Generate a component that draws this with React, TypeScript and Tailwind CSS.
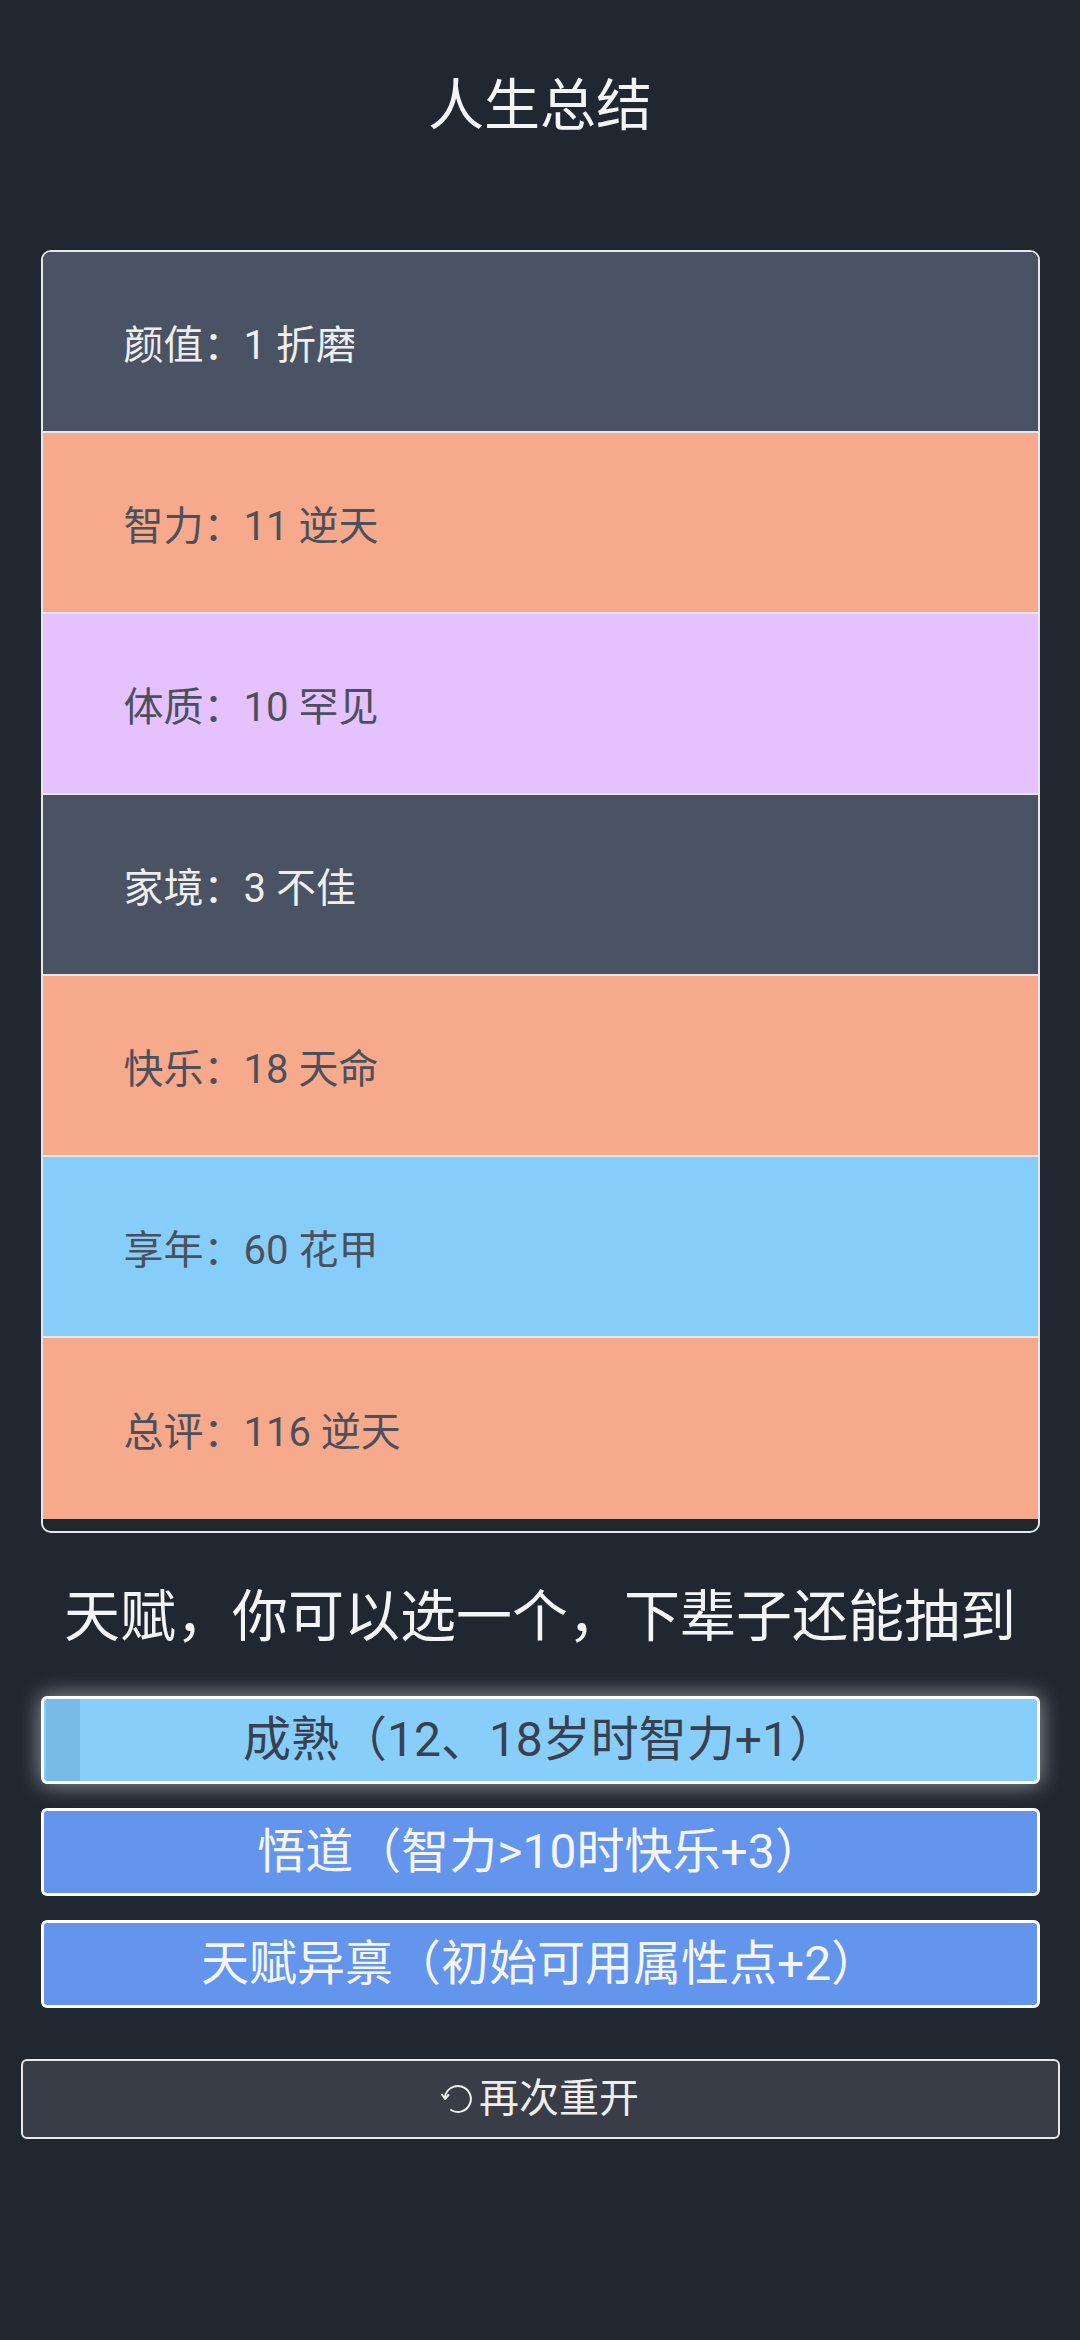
import React from "react";

const rows: { label: string; bg: string; text: string }[] = [
  { label: "颜值：1 折磨", bg: "bg-[#4a5363]", text: "text-[#eeeeee]" },
  { label: "智力：11 逆天", bg: "bg-[#f7a98b]", text: "text-[#4b505c]" },
  { label: "体质：10 罕见", bg: "bg-[#e5c1fe]", text: "text-[#4b505c]" },
  { label: "家境：3 不佳", bg: "bg-[#4a5363]", text: "text-[#eeeeee]" },
  { label: "快乐：18 天命", bg: "bg-[#f7a98b]", text: "text-[#4b505c]" },
  { label: "享年：60 花甲", bg: "bg-[#87cdf9]", text: "text-[#4b505c]" },
  { label: "总评：116 逆天", bg: "bg-[#f7a98b]", text: "text-[#4b505c]" },
];

function RestartIcon() {
  return (
    <svg width="34" height="34" viewBox="0 0 34 34" fill="none" className="shrink-0">
      <path
        d="M4 15 A13 13 0 1 1 10 28"
        stroke="#eeeeee"
        strokeWidth="2"
        strokeLinecap="round"
        fill="none"
      />
      <path
        d="M1 12.5 L4 17 L7.5 13"
        stroke="#eeeeee"
        strokeWidth="2"
        strokeLinecap="round"
        strokeLinejoin="round"
        fill="none"
      />
    </svg>
  );
}

export default function App() {
  return (
    <div
      className="w-full min-h-[2340px] bg-[#212731] flex flex-col items-center"
      style={{ fontFamily: 'Roboto, "Noto Sans CJK SC", "Noto Sans", sans-serif' }}
    >
      <div className="pt-[72px] h-[250px] text-[56px] leading-[68px] text-[#f3f4f6]">
        人生总结
      </div>

      <div className="w-[999px] border-2 border-[#e5e7eb] rounded-[10px] overflow-hidden bg-[#212731] pb-[12px]">
        {rows.map((r, i) => (
          <div
            key={i}
            className={`h-[181px] flex items-center pl-[81px] pt-[8px] text-[40px] ${r.bg} ${r.text} ${
              i < rows.length - 1 ? "border-b-2 border-[#e5e7eb]" : ""
            }`}
          >
            {r.label}
          </div>
        ))}
      </div>

      <div className="mt-[48px] text-[56px] leading-[72px] text-[#f3f4f6]">
        天赋，你可以选一个，下辈子还能抽到
      </div>

      <div className="mt-[43px] flex flex-col gap-[24px]">
        <div className="relative w-[999px] h-[88px] border-[3px] border-white rounded-[6px] bg-[#87cefa] overflow-hidden shadow-[0_0_22px_rgba(255,255,255,0.55)] flex items-center justify-center text-[48px] text-[#394150]">
          <div className="absolute left-[2px] top-0 bottom-0 w-[34px] bg-[#78bbe6]" />
          <span className="relative">成熟（12、18岁时智力+1）</span>
        </div>
        <div className="w-[999px] h-[88px] border-[3px] border-white rounded-[6px] bg-[#6495ed] flex items-center justify-center text-[48px] text-[#f5f5f5]">
          悟道（智力&gt;10时快乐+3）
        </div>
        <div className="w-[999px] h-[88px] border-[3px] border-white rounded-[6px] bg-[#6495ed] flex items-center justify-center text-[48px] text-[#f5f5f5]">
          天赋异禀（初始可用属性点+2）
        </div>
      </div>

      <div className="mt-[51px] w-[1039px] h-[80px] border-2 border-[#e5e7eb] rounded-[6px] bg-[#393d47] flex items-center justify-center gap-[4px] text-[40px] text-[#eeeeee]">
        <RestartIcon />
        <span>再次重开</span>
      </div>
    </div>
  );
}
